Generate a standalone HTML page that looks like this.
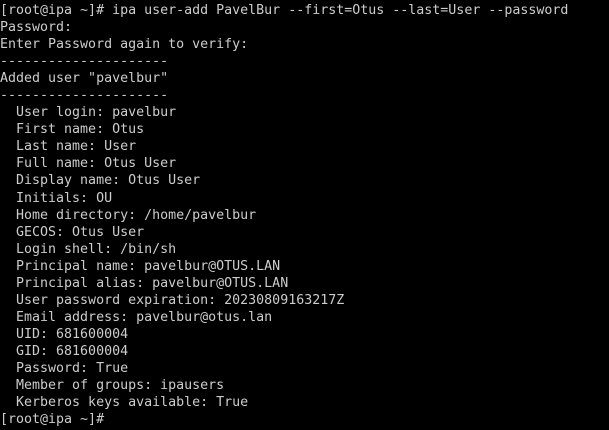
<!DOCTYPE html>
<html><head><meta charset="utf-8"><style>
html,body{margin:0;padding:0;background:#000;width:609px;height:430px;overflow:hidden}
pre{margin:0;padding:2px 0 0 0;font-family:"DejaVu Sans Mono","Liberation Mono",monospace;font-size:13.3px;line-height:17.05px;color:#cccccc}
</style></head><body><pre>[root@ipa ~]# ipa user-add PavelBur --first=Otus --last=User --password
Password:
Enter Password again to verify:
---------------------
Added user "pavelbur"
---------------------
  User login: pavelbur
  First name: Otus
  Last name: User
  Full name: Otus User
  Display name: Otus User
  Initials: OU
  Home directory: /home/pavelbur
  GECOS: Otus User
  Login shell: /bin/sh
  Principal name: pavelbur@OTUS.LAN
  Principal alias: pavelbur@OTUS.LAN
  User password expiration: 20230809163217Z
  Email address: pavelbur@otus.lan
  UID: 681600004
  GID: 681600004
  Password: True
  Member of groups: ipausers
  Kerberos keys available: True
[root@ipa ~]#</pre></body></html>
